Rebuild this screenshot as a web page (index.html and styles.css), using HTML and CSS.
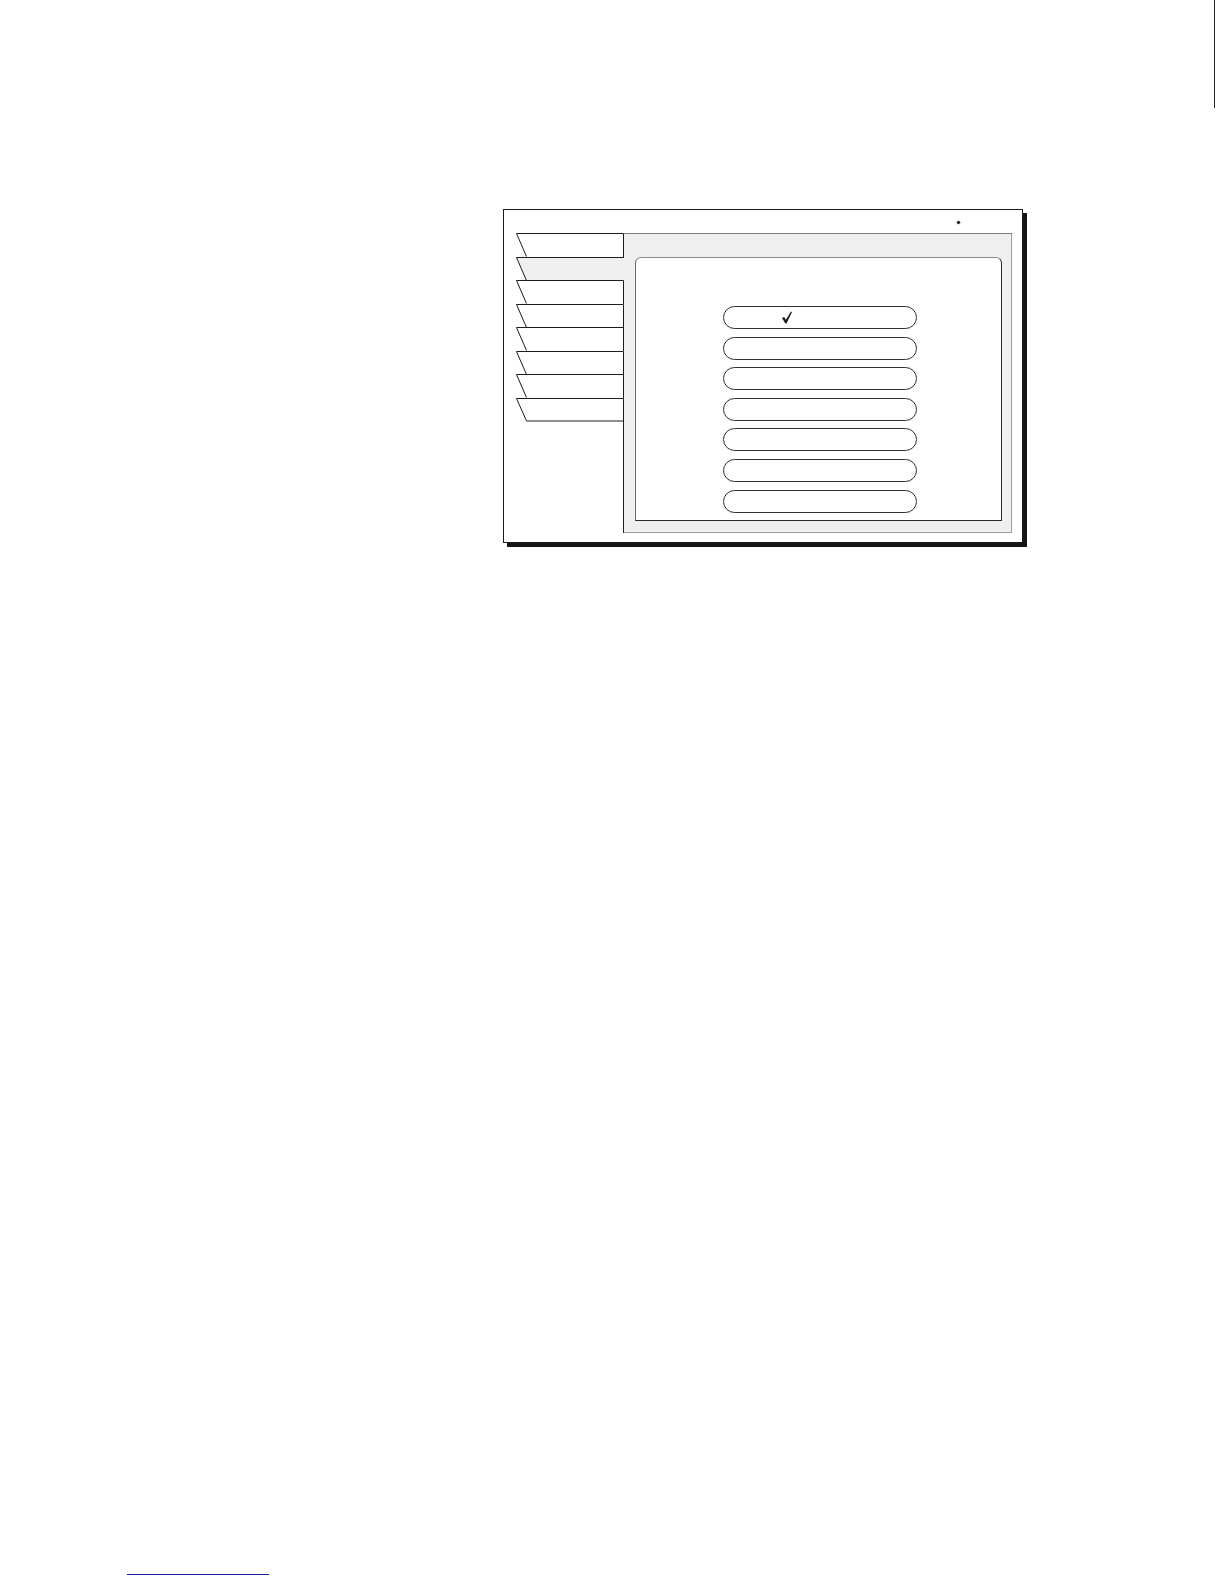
FILE: index.html
```html
<!DOCTYPE html>
<html lang="en">
<head>
<meta charset="utf-8">
<title>Menu screen</title>
<link rel="stylesheet" href="styles.css">
</head>
<body>
<div class="page">
  <div class="edge-mark"></div>
  <div class="frame">
    <div class="frame-head"><span class="dot"></span></div>
    <div class="frame-body">
      <div class="tabs">
        <div class="tab"><svg viewBox="0 0 108 24" preserveAspectRatio="none"><polygon points="0.5,0.5 107.5,0.5 107.5,24 10.5,24" class="fill-white"/><polyline points="107.5,24 107.5,0.5 0.5,0.5 10.5,23.5" class="edge"/></svg></div>
        <div class="tab selected"><svg viewBox="0 0 108 24" preserveAspectRatio="none"><polygon points="0.5,0.5 108,0.5 108,24 10.5,24" class="fill-grey"/><polyline points="108,0.5 0.5,0.5 10.5,23.5" class="edge"/></svg></div>
        <div class="tab"><svg viewBox="0 0 108 24" preserveAspectRatio="none"><polygon points="0.5,0.5 107.5,0.5 107.5,24 10.5,24" class="fill-white"/><polyline points="107.5,24 107.5,0.5 0.5,0.5 10.5,23.5" class="edge"/></svg></div>
        <div class="tab"><svg viewBox="0 0 108 24" preserveAspectRatio="none"><polygon points="0.5,0.5 107.5,0.5 107.5,24 10.5,24" class="fill-white"/><polyline points="107.5,24 107.5,0.5 0.5,0.5 10.5,23.5" class="edge"/></svg></div>
        <div class="tab"><svg viewBox="0 0 108 24" preserveAspectRatio="none"><polygon points="0.5,0.5 107.5,0.5 107.5,24 10.5,24" class="fill-white"/><polyline points="107.5,24 107.5,0.5 0.5,0.5 10.5,23.5" class="edge"/></svg></div>
        <div class="tab"><svg viewBox="0 0 108 24" preserveAspectRatio="none"><polygon points="0.5,0.5 107.5,0.5 107.5,24 10.5,24" class="fill-white"/><polyline points="107.5,24 107.5,0.5 0.5,0.5 10.5,23.5" class="edge"/></svg></div>
        <div class="tab"><svg viewBox="0 0 108 24" preserveAspectRatio="none"><polygon points="0.5,0.5 107.5,0.5 107.5,24 10.5,24" class="fill-white"/><polyline points="107.5,24 107.5,0.5 0.5,0.5 10.5,23.5" class="edge"/></svg></div>
        <div class="tab last"><svg viewBox="0 0 108 24" preserveAspectRatio="none"><polygon points="0.5,0.5 107.5,0.5 107.5,23.5 10.5,23.5" class="fill-white"/><polyline points="107.5,24 107.5,0.5 0.5,0.5 10.5,23.5 107.5,23.5" class="edge"/></svg></div>
        <div class="tab-rest"></div>
      </div>
      <div class="panel">
        <div class="sheet">
          <div class="pill checked">
            <svg class="check" viewBox="0 0 10 12"><path d="M0,6.6 L2.1,5.5 L3.9,8.2 L8.9,0 L10,0.4 L4.5,12 L3.4,12 Z"/></svg>
          </div>
          <div class="pill"></div>
          <div class="pill"></div>
          <div class="pill"></div>
          <div class="pill"></div>
          <div class="pill"></div>
          <div class="pill"></div>
        </div>
      </div>
    </div>
  </div>
  <div class="footer"><span class="footer-rule"></span></div>
</div>
</body>
</html>
```

FILE: styles.css
```css
html, body {
  margin: 0;
  padding: 0;
  background: #ffffff;
  font-family: "Liberation Sans", Arial, sans-serif;
}

.page {
  display: flex;
  flex-direction: column;
  min-height: 1584px;
  box-sizing: border-box;
}

.edge-mark {
  align-self: flex-end;
  width: 1px;
  height: 108px;
  margin-right: 9px;
  background: #222222;
}

.frame {
  margin-top: 101px;
  margin-left: 503px;
  width: 520px;
  height: 334px;
  box-sizing: border-box;
  border: 1px solid #1a1a1a;
  background: #ffffff;
  box-shadow: 4px 4px 0 #151515;
  display: flex;
  flex-direction: column;
  padding: 0 10px 9px 12px;
}

.frame-head {
  height: 23px;
  display: flex;
  justify-content: flex-end;
  align-items: center;
  padding-right: 52px;
  padding-top: 2px;
  box-sizing: border-box;
}

.dot {
  width: 3px;
  height: 3px;
  background: #111111;
  transform: rotate(45deg);
}

.frame-body {
  flex: 1;
  display: flex;
}

.tabs {
  width: 108px;
  display: flex;
  flex-direction: column;
}

.tab {
  height: 23.5px;
  display: block;
}

.tab svg {
  display: block;
  width: 108px;
  height: 24px;
  overflow: visible;
}

.tab.last svg {
  height: 23.5px;
}

.fill-white { fill: #ffffff; }
.fill-grey { fill: #efefef; }

.edge {
  fill: none;
  stroke: #1c1c1c;
  stroke-width: 1;
  vector-effect: non-scaling-stroke;
}

.tab-rest {
  flex: 1;
  border-right: 1px solid #222222;
}

.panel {
  flex: 1;
  background: #efefef;
  border-top: 1px solid #7a7a7a;
  border-right: 1px solid #9a9a9a;
  border-bottom: 1px solid #9a9a9a;
  padding: 23px 9px 11px 11px;
  display: flex;
}

.sheet {
  flex: 1;
  background: #ffffff;
  border: 1px solid #2a2a2a;
  border-top-color: #8a8a8a;
  border-left-color: #6a6a6a;
  border-radius: 6px 6px 0 0;
  display: flex;
  flex-direction: column;
  align-items: center;
  gap: 7.6px;
  padding: 48px 0 0 3px;
}

.pill {
  width: 194px;
  height: 23px;
  box-sizing: border-box;
  border: 1px solid #2e2e2e;
  border-radius: 12px;
  background: #ffffff;
  display: flex;
  align-items: center;
  padding-left: 58px;
}

.check {
  width: 10px;
  height: 13px;
  margin-top: -1px;
  fill: #1a1a1a;
}

.footer {
  margin-top: auto;
  padding: 0 0 9px 127px;
  display: flex;
}

.footer-rule {
  width: 142px;
  height: 1px;
  background: #1e1e9c;
}
```
